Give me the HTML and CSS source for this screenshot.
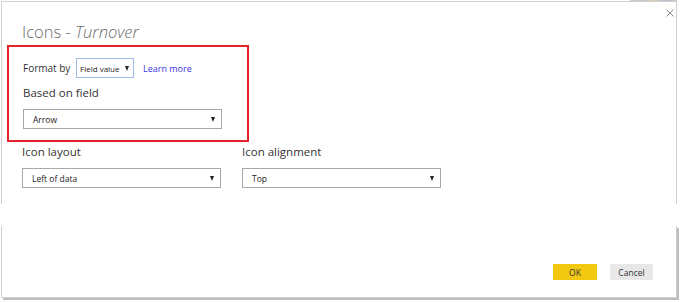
FILE: index.html
```html
<!DOCTYPE html>
<html lang="en">
<head>
    <meta charset="UTF-8">
    <meta name="viewport" content="width=device-width, initial-scale=1.0">
    <title>Icons - Turnover</title>
    <link rel="stylesheet" href="styles.css">
</head>
<body>
    <div class="backdrop"></div>

    <div class="dialog-top">
        <svg class="close" width="8" height="8" viewBox="0 0 8 8">
            <path d="M0.5 0.5 L7.5 7.5 M7.5 0.5 L0.5 7.5" stroke="#8a8a8a" stroke-width="1" fill="none"/>
        </svg>
        <h1 class="title">Icons - <em>Turnover</em></h1>

        <div class="highlight">
            <div class="format-row">
                <span class="small-label">Format by</span>
                <div class="select select-small">
                    <span>Field value</span>
                    <span class="caret"></span>
                </div>
                <a class="learn" href="#">Learn more</a>
            </div>
            <div class="label">Based on field</div>
            <div class="select">
                <span>Arrow</span>
                <span class="caret"></span>
            </div>
        </div>

        <div class="columns">
            <div class="column">
                <div class="label">Icon layout</div>
                <div class="select">
                    <span>Left of data</span>
                    <span class="caret"></span>
                </div>
            </div>
            <div class="column">
                <div class="label">Icon alignment</div>
                <div class="select">
                    <span>Top</span>
                    <span class="caret"></span>
                </div>
            </div>
        </div>
    </div>

    <div class="gap"></div>

    <div class="dialog-bottom">
        <button class="btn btn-ok">OK</button>
        <button class="btn btn-cancel">Cancel</button>
    </div>
</body>
</html>
```

FILE: styles.css
```css
body {
    margin: 0;
    background-color: #fff;
    font-family: "Open Sans", "Noto Sans", sans-serif;
    color: #333;
    position: relative;
    width: 680px;
    height: 302px;
    overflow: hidden;
}
/* bit of the report peeking out behind the dialog */
.backdrop {
    position: absolute;
    left: 630px;
    top: 0;
    width: 47px;
    height: 2px;
    background: linear-gradient(90deg, #d9cfb8, #b9c6d8, #e0d2b0, #aebed6, #d8cdb6);
}
.dialog-top {
    position: relative;
    margin: 1px 0 0 1px;
    width: 676px;
    height: 203px;
    border: 1px solid #cfcfcf;
    border-bottom: none;
    padding: 0 0 0 20px;
    box-sizing: border-box;
}
.close {
    position: absolute;
    right: 2px;
    top: 7px;
}
.title {
    margin: 0;
    padding-top: 18px;
    font-size: 16.5px;
    line-height: 23px;
    font-weight: 300;
    color: #6b6b6b;
}
.title em {
    font-style: italic;
}
.highlight {
    margin: 2px 0 0 -15px;
    width: 242px;
    height: 97px;
    padding: 11px 0 0 14px;
    border: 2px solid #e8202a;
    box-sizing: border-box;
}
.format-row {
    display: flex;
    align-items: center;
}
.small-label {
    font-size: 10px;
    width: 53px;
    white-space: nowrap;
}
.learn {
    margin-left: 9px;
    font-size: 9px;
    color: #3535e8;
    text-decoration: none;
    white-space: nowrap;
}
.label {
    font-size: 11.5px;
    line-height: 18px;
    margin: 6px 0 7px;
    white-space: nowrap;
}
.select {
    display: flex;
    align-items: center;
    justify-content: space-between;
    width: 199px;
    height: 20px;
    box-sizing: border-box;
    border: 1px solid #a8a8a8;
    padding: 0 6px 0 9px;
    font-size: 8.5px;
    color: #222;
    white-space: nowrap;
}
.select-small {
    width: 58px;
    padding: 0 4px 0 3px;
    border-color: #9fbde3;
    font-size: 8px;
}
.caret {
    flex: none;
    width: 0;
    height: 0;
    border-left: 2.5px solid transparent;
    border-right: 2.5px solid transparent;
    border-top: 5px solid #222;
}
.columns {
    display: flex;
    gap: 21px;
    margin-top: 1px;
}
.column .label {
    margin: 0 0 7px;
}
.gap {
    height: 22px;
}
.dialog-bottom {
    display: flex;
    justify-content: flex-end;
    align-items: flex-start;
    gap: 13px;
    margin-left: 1px;
    width: 676px;
    height: 72px;
    padding: 38px 23px 0 0;
    box-sizing: border-box;
    border: 1px solid #cfcfcf;
    border-top: none;
    box-shadow: 2px 2px 0 #bdbdbd;
}
.btn {
    width: 44px;
    height: 16px;
    padding: 0;
    border: none;
    font-family: "Open Sans", "Noto Sans", sans-serif;
    font-size: 8.5px;
    color: #333;
}
.btn-ok {
    background-color: #f2c811;
}
.btn-cancel {
    width: 43px;
    background-color: #e8e8e8;
}
```
